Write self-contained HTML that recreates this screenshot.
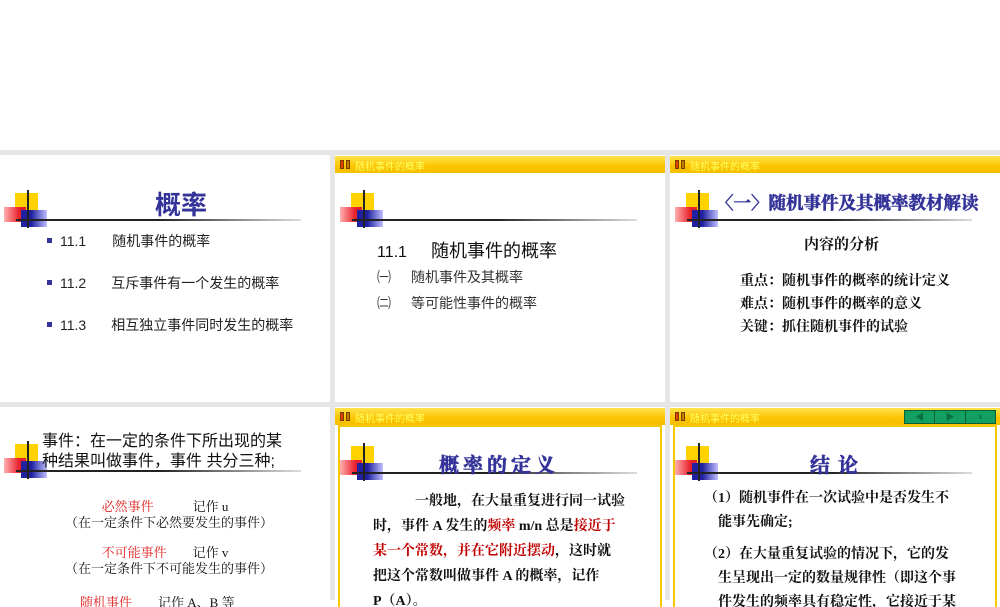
<!DOCTYPE html>
<html><head><meta charset="utf-8"><style>
*{margin:0;padding:0;box-sizing:border-box}
body{width:1000px;height:600px;background:#fff;position:relative;overflow:hidden;font-family:"Liberation Sans","Noto Sans CJK SC",sans-serif}
.bg{position:absolute;left:0;top:150px;width:1000px;height:450px;background:#e6e6e6}
.s{position:absolute;background:#fff;overflow:hidden}
.a{position:absolute;white-space:nowrap}
.hb{position:absolute;left:0;top:1px;right:0;height:17px;background:linear-gradient(#ffe34d,#fcc400 60%,#f5c000)}
.hb span{position:absolute;left:20px;top:2px;font-size:10px;color:#ffff60}
.hb i{position:absolute;top:4px;width:4px;height:9px;border:1px solid #7a3b00;background:#e04000}
.logo{position:absolute;width:300px;height:40px}
.y{position:absolute;left:11px;top:3px;width:23px;height:22px;background:#ffd200}
.r{position:absolute;left:0;top:17px;width:22px;height:15px;background:linear-gradient(90deg,#ffb0b0,#e8202a 70%)}
.b{position:absolute;left:17px;top:20px;width:26px;height:17px;background:linear-gradient(90deg,#2020a0 40%,#c0c0ff)}
.v{position:absolute;left:23px;top:0;width:2px;height:38px;background:#222}
.h{position:absolute;left:12px;top:29px;width:285px;height:2px;background:linear-gradient(90deg,#222 50%,#ddd)}
.t{color:#333399;font-weight:bold}
.sr{font-family:"Liberation Serif","Noto Serif CJK SC",serif}
.fr{position:absolute;left:3px;top:18px;right:3px;bottom:-5px;border:2px solid #f5c800;border-bottom:none}
</style></head><body>
<div class="bg"></div>

<!-- slide 1 -->
<div class="s" style="left:0;top:155px;width:330px;height:247px">
 <div class="logo" style="left:4px;top:35px"><div class="y"></div><div class="r"></div><div class="b"></div><div class="v"></div><div class="h"></div></div>
 <div class="a t" style="left:155px;top:30px;font-size:26px">概率</div>
 <div class="a" style="left:47px;top:76px;font-size:14px;color:#222"><span style="display:inline-block;width:5px;height:5px;background:#333399;vertical-align:3px;margin-right:8px"></span>11.1<span style="margin-left:26px">随机事件的概率</span></div>
 <div class="a" style="left:47px;top:118px;font-size:14px;color:#222"><span style="display:inline-block;width:5px;height:5px;background:#333399;vertical-align:3px;margin-right:8px"></span>11.2<span style="margin-left:25px">互斥事件有一个发生的概率</span></div>
 <div class="a" style="left:47px;top:160px;font-size:14px;color:#222"><span style="display:inline-block;width:5px;height:5px;background:#333399;vertical-align:3px;margin-right:8px"></span>11.3<span style="margin-left:25px">相互独立事件同时发生的概率</span></div>
</div>

<!-- slide 2 -->
<div class="s" style="left:335px;top:155px;width:330px;height:247px">
 <div class="hb"><i style="left:5px"></i><i style="left:11px;background:#c08000"></i><span>随机事件的概率</span></div>
 <div class="logo" style="left:5px;top:35px"><div class="y"></div><div class="r"></div><div class="b"></div><div class="v"></div><div class="h"></div></div>
 <div class="a" style="left:42px;top:82px;font-size:16px;color:#111">11.1<span style="margin-left:24px;font-size:18px">随机事件的概率</span></div>
 <div class="a" style="left:42px;top:112px;font-size:14px;color:#333">㈠<span style="margin-left:20px">随机事件及其概率</span></div>
 <div class="a" style="left:42px;top:138px;font-size:14px;color:#333">㈡<span style="margin-left:20px">等可能性事件的概率</span></div>
</div>

<!-- slide 3 -->
<div class="s" style="left:670px;top:155px;width:330px;height:247px">
 <div class="hb"><i style="left:5px"></i><i style="left:11px;background:#c08000"></i><span>随机事件的概率</span></div>
 <div class="logo" style="left:5px;top:35px"><div class="y"></div><div class="r"></div><div class="b"></div><div class="v"></div><div class="h"></div></div>
 <div class="a t sr" style="left:46px;top:35px;font-size:17.5px;-webkit-text-stroke:0.6px #333399">〈一〉随机事件及其概率教材解读</div>
 <div class="a sr" style="left:134px;top:78px;font-size:15px;font-weight:bold;color:#111">内容的分析</div>
 <div class="a sr" style="left:70px;top:115px;font-size:14px;font-weight:bold;color:#111;line-height:23px">重点：随机事件的概率的统计定义<br>难点：随机事件的概率的意义<br>关键：抓住随机事件的试验</div>
</div>

<!-- slide 4 -->
<div class="s" style="left:0;top:407px;width:330px;height:200px">
 <div class="logo" style="left:4px;top:34px"><div class="y"></div><div class="r"></div><div class="b"></div><div class="v"></div><div class="h"></div></div>
 <div class="a" style="left:42px;top:25px;font-size:16px;color:#111;line-height:20px">事件：在一定的条件下所出现的某<br>种结果叫做事件，事件 共分三种;</div>
 <div class="a sr" style="left:65px;top:92px;font-size:13px;line-height:16px;text-align:center;width:200px;color:#111"><span style="color:#e02020">必然事件</span>　　　记作 u<br>（在一定条件下必然要发生的事件）</div>
 <div class="a sr" style="left:65px;top:138px;font-size:13px;line-height:16px;text-align:center;width:200px;color:#111"><span style="color:#e02020">不可能事件</span>　　记作 v<br>（在一定条件下不可能发生的事件）</div>
 <div class="a sr" style="left:80px;top:185px;font-size:13px;color:#111"><span style="color:#e02020">随机事件</span>　　记作 A、B 等</div>
</div>

<!-- slide 5 -->
<div class="s" style="left:335px;top:407px;width:330px;height:200px">
 <div class="hb"><i style="left:5px"></i><i style="left:11px;background:#c08000"></i><span>随机事件的概率</span></div>
 <div class="fr"></div>
 <div class="logo" style="left:5px;top:36px"><div class="y"></div><div class="r"></div><div class="b"></div><div class="v"></div><div class="h"></div></div>
 <div class="a t sr" style="left:104px;top:42px;font-size:20px;letter-spacing:4px;-webkit-text-stroke:0.6px #333399">概率的定义</div>
 <div class="a sr" style="left:38px;top:82px;font-size:14px;line-height:25px;color:#111;font-weight:bold">　　　一般地，在大量重复进行同一试验<br>时，事件 A 发生的<span style="color:#c00000">频率</span> m/n 总是<span style="color:#c00000">接近于</span><br><span style="color:#c00000">某一个常数，并在它附近摆动</span>，这时就<br>把这个常数叫做事件 A 的概率，记作<br>P（A）。</div>
</div>

<!-- slide 6 -->
<div class="s" style="left:670px;top:407px;width:330px;height:200px">
 <div class="hb"><i style="left:5px"></i><i style="left:11px;background:#c08000"></i><span>随机事件的概率</span>
  <div style="position:absolute;left:234px;top:2px;width:92px;height:14px;background:#11a060;border:1px solid #086030;display:flex">
   <div style="flex:1;border-right:1px solid #086030;color:#087040;font-size:9px;text-align:center;line-height:12px">◀</div>
   <div style="flex:1;border-right:1px solid #086030;color:#087040;font-size:9px;text-align:center;line-height:12px">▶</div>
   <div style="flex:1;color:#063;font-size:8px;text-align:center;line-height:12px">x</div>
  </div></div>
 <div class="fr"></div>
 <div class="logo" style="left:5px;top:36px"><div class="y"></div><div class="r"></div><div class="b"></div><div class="v"></div><div class="h"></div></div>
 <div class="a t sr" style="left:140px;top:42px;font-size:20px;letter-spacing:8px;-webkit-text-stroke:0.6px #333399">结论</div>
 <div class="a sr" style="left:34px;top:80px;font-size:14px;line-height:24px;color:#111;font-weight:bold">（1）随机事件在一次试验中是否发生不<br>　能事先确定;</div>
 <div class="a sr" style="left:34px;top:136px;font-size:14px;line-height:24px;color:#111;font-weight:bold">（2）在大量重复试验的情况下，它的发<br>　生呈现出一定的数量规律性（即这个事<br>　件发生的频率具有稳定性，它接近于某</div>
</div>
</body></html>
